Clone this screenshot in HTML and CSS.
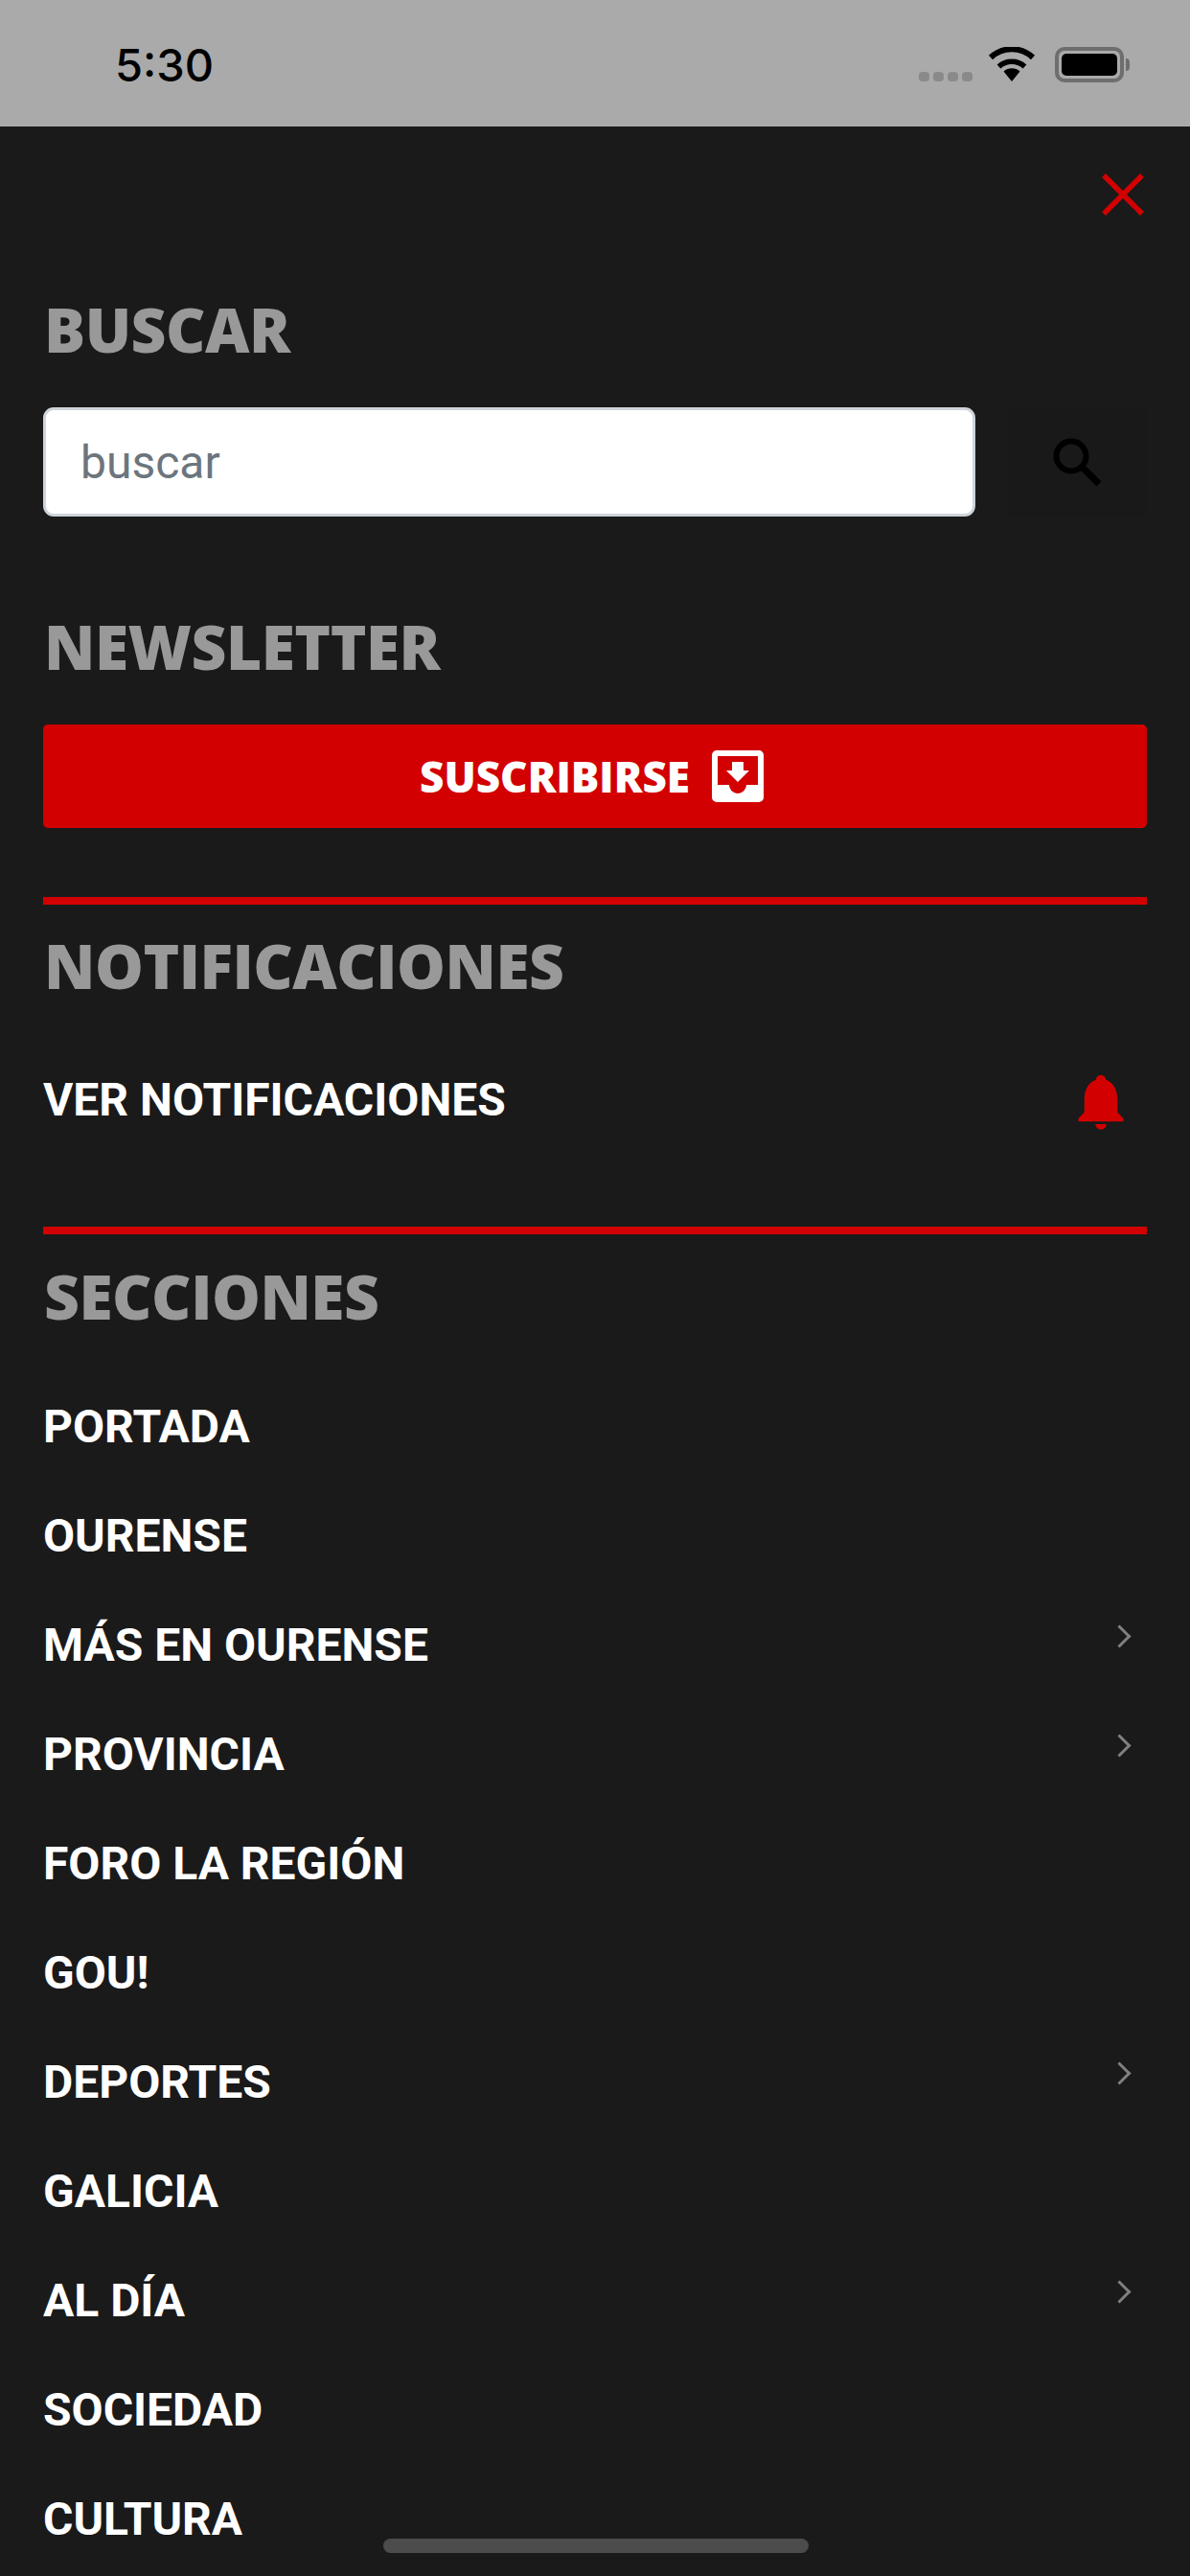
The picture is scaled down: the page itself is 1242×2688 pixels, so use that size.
FILE: index.html
```html
<!DOCTYPE html>
<html lang="es">
  <head>
    <meta charset="UTF-8" />
    <meta name="viewport" content="width=device-width, initial-scale=1.0" />
    <title>Menu</title>
    <link rel="stylesheet" href="styles.css">
  </head>
  <body>
    <div class="status-bar">
      <span class="time">5:30</span>
      <div class="status-icons">
        <div class="signal"><i></i><i></i><i></i><i></i></div>
        <svg class="wifi" width="50" height="36" viewBox="0 0 50 36">
          <path d="M25 36 L16.500 25.500 A13 13 0 0 1 33.500 25.500 Z" fill="#000"/>
          <path d="M11.500 20.500 A20 20 0 0 1 38.500 20.500" fill="none" stroke="#000" stroke-width="5.500"/>
          <path d="M3 11 A32 32 0 0 1 47 11" fill="none" stroke="#000" stroke-width="6"/>
        </svg>
        <div class="battery"><div class="battery-fill"></div></div>
        <div class="battery-cap"></div>
      </div>
    </div>
    <div class="menu">
      <div class="close-row">
        <svg width="44" height="44" viewBox="0 0 44 44">
          <path d="M2 2 L42 42 M42 2 L2 42" stroke="#d20000" stroke-width="5.500" fill="none"/>
        </svg>
      </div>
      <h2 class="title title-buscar">BUSCAR</h2>
      <form class="search">
        <input class="search-input" type="text" placeholder="buscar" />
        <button class="search-btn" type="button">
          <svg width="54" height="54" viewBox="0 0 54 54">
            <circle cx="21" cy="21" r="15.500" fill="none" stroke="#000" stroke-width="6"/>
            <path d="M32 32 L50 50" stroke="#000" stroke-width="7" fill="none"/>
          </svg>
        </button>
      </form>
      <h2 class="title title-newsletter">NEWSLETTER</h2>
      <button class="subscribe" type="button">
        <span>SUSCRIBIRSE</span>
        <svg width="54" height="54" viewBox="0 0 54 54">
          <path fill-rule="evenodd" fill="#fff" d="M5 0 H49 A5 5 0 0 1 54 5 V49 A5 5 0 0 1 49 54 H5 A5 5 0 0 1 0 49 V5 A5 5 0 0 1 5 0 Z M6 6 V36 H18 A9 9 0 0 0 36 36 H48 V6 Z"/>
          <path fill="#fff" d="M21 12 H33 V21 H39 L27 33 L15 21 H21 Z"/>
        </svg>
      </button>
      <hr class="rule rule-first" />
      <h2 class="title title-notif">NOTIFICACIONES</h2>
      <div class="notif-row">
        <span class="item-text">VER NOTIFICACIONES</span>
        <svg class="bell" width="48" height="58" viewBox="0 0 50 60">
          <circle cx="25" cy="6" r="5.500" fill="#d20000"/>
          <path fill="#d20000" d="M25 5 C37 5 43 15 43 28 V41 L49.500 48 V51 H0.500 V48 L7 41 V28 C7 15 13 5 25 5 Z"/>
          <path fill="#d20000" d="M19 54 H31 A6 6 0 0 1 19 54 Z"/>
        </svg>
      </div>
      <hr class="rule rule-second" />
      <h2 class="title title-secciones">SECCIONES</h2>
      <ul class="sections">
        <li class="section">PORTADA</li>
        <li class="section">OURENSE</li>
        <li class="section has-sub">MÁS EN OURENSE</li>
        <li class="section has-sub">PROVINCIA</li>
        <li class="section">FORO LA REGIÓN</li>
        <li class="section">GOU!</li>
        <li class="section has-sub">DEPORTES</li>
        <li class="section">GALICIA</li>
        <li class="section has-sub">AL DÍA</li>
        <li class="section">SOCIEDAD</li>
        <li class="section">CULTURA</li>
      </ul>
    </div>
    <div class="home-bar"></div>
  </body>
</html>
```

FILE: styles.css
```css
* {
  box-sizing: border-box;
}
html,
body {
  margin: 0;
  height: 2688px;
  overflow: hidden;
}
body {
  position: relative;
  background: #1a1a1a;
  font-family: Roboto, sans-serif;
}
.status-bar {
  height: 132px;
  background: #aaaaaa;
  display: flex;
  justify-content: space-between;
  align-items: flex-start;
  padding: 42px 63px 0 120px;
}
.time {
  font-family: Inter, sans-serif;
  font-weight: 500;
  font-size: 47px;
  line-height: 52px;
  color: #000;
}
.status-icons {
  display: flex;
  align-items: flex-start;
  margin-top: 7px;
}
.signal {
  display: flex;
  gap: 4px;
  margin: 26px 16px 0 0;
}
.signal i {
  width: 11px;
  height: 10px;
  border-radius: 4px;
  background: #8a8a8a;
}
.wifi {
  margin-right: 20px;
}
.battery {
  width: 72px;
  height: 37px;
  border: 4px solid #6e6e6e;
  border-radius: 10px;
  padding: 3px;
}
.battery-fill {
  height: 100%;
  background: #000;
  border-radius: 5px;
}
.battery-cap {
  width: 4px;
  height: 13px;
  margin: 12px 0 0 2px;
  background: #6e6e6e;
  border-radius: 0 4px 4px 0;
}
.menu {
  padding: 0 45px;
}
.close-row {
  display: flex;
  justify-content: flex-end;
  padding: 49px 3px 0 0;
  height: 93px;
  line-height: 0;
}
.title {
  margin: 0;
  font-family: "Open Sans", sans-serif;
  font-weight: 800;
  font-size: 64px;
  line-height: 80px;
  color: #999999;
  padding-left: 1px;
  letter-spacing: -0.5px;
}
.title-buscar {
  margin-top: 79px;
}
.search {
  display: flex;
  gap: 32px;
  margin-top: 41px;
}
.search-input {
  width: 973px;
  height: 114px;
  padding: 0 36px;
  border: 3px solid #ced4da;
  border-radius: 11px;
  background: #fff;
  font-family: Roboto, sans-serif;
  font-size: 48px;
}
.search-input::placeholder {
  color: #6c757d;
  opacity: 1;
}
.search-btn {
  width: 147px;
  height: 114px;
  padding: 0;
  border: none;
  background: #191919;
  display: flex;
  align-items: center;
  justify-content: center;
}
.title-newsletter {
  margin-top: 96px;
}
.subscribe {
  width: 1152px;
  height: 108px;
  margin-top: 41px;
  padding: 0 7px 0 0;
  border: none;
  border-radius: 5px;
  background: #d20000;
  display: flex;
  align-items: center;
  justify-content: center;
  gap: 23px;
  color: #fff;
  font-family: "Open Sans", sans-serif;
  font-weight: 800;
  font-size: 44px;
}
.rule {
  margin: 0;
  border: none;
  height: 8px;
  background: #d20000;
}
.rule-first {
  margin-top: 72px;
}
.title-notif {
  margin-top: 24px;
}
.notif-row {
  display: flex;
  justify-content: space-between;
  align-items: center;
  height: 108px;
  margin-top: 45px;
  padding-right: 24px;
}
.bell {
  margin-top: 6px;
}
.item-text,
.section {
  font-size: 48px;
  font-weight: 700;
  color: #fff;
}
.rule-second {
  margin-top: 79px;
}
.title-secciones {
  margin-top: 25px;
}
.sections {
  list-style: none;
  margin: 39px 0 0;
  padding: 0;
}
.section {
  position: relative;
  height: 114px;
  line-height: 114px;
}
.has-sub::after {
  content: "";
  position: absolute;
  top: 39px;
  right: 20px;
  width: 14px;
  height: 14px;
  border-top: 3px solid #808080;
  border-right: 3px solid #808080;
  transform: rotate(45deg);
}
.home-bar {
  position: absolute;
  left: 400px;
  top: 2649px;
  width: 444px;
  height: 15px;
  border-radius: 8px;
  background: #4c4c4c;
}
```
